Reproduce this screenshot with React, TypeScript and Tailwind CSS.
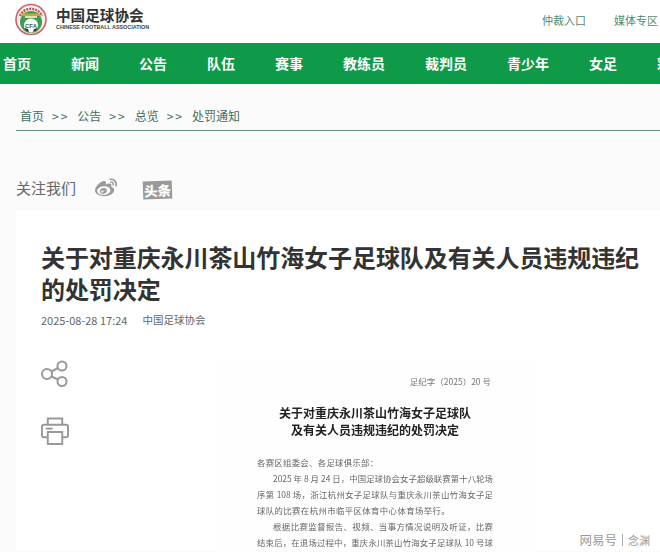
import { FaWeibo } from "react-icons/fa";

const cjk = { fontFamily: '"Noto Sans CJK SC", "Liberation Sans", sans-serif' };

const navItems = ["首页", "新闻", "公告", "队伍", "赛事", "教练员", "裁判员", "青少年", "女足", "彩票"];
const crumbs = ["首页", "公告", "总览", "处罚通知"];

function Logo() {
  return (
    <svg width="34" height="36" viewBox="0 0 34 36" className="shrink-0">
      <circle cx="16" cy="18.5" r="15" fill="#fbeee6" stroke="#c9646c" strokeWidth="1.6" />
      <path d="M5 15 A12 12 0 0 1 27 15" fill="none" stroke="#c0505a" strokeWidth="2.4" strokeDasharray="2 1" />
      <circle cx="16" cy="21" r="11" fill="#3f9c55" />
      <path d="M8 12.5 H24 L25.5 15 H6.5 Z" fill="#c2a93a" />
      <path d="M10 15 H22 V17 H10 Z" fill="#e8e2a0" />
      <circle cx="16" cy="24.5" r="7" fill="#fff" />
      <path d="M9.5 27 L13 28 L14 31 Q10.5 30.5 9.5 27 Z M22.5 27 L19 28 L18 31 Q21.5 30.5 22.5 27 Z" fill="#333" />
      <text
        x="16"
        y="26.5"
        textAnchor="middle"
        fontSize="6"
        fontWeight="700"
        fill="#2f5f48"
        fontFamily="Liberation Sans, sans-serif"
      >
        CFA
      </text>
    </svg>
  );
}

function ShareIcon() {
  return (
    <svg width="28" height="28" viewBox="0 0 28 28" fill="none" stroke="#999" strokeWidth="2">
      <circle cx="6" cy="14" r="5" />
      <circle cx="21" cy="6" r="4.5" />
      <circle cx="21" cy="21.5" r="4.5" />
      <path d="M10.5 11.5 L17 8 M10.5 16.5 L17 19.5" />
    </svg>
  );
}

function PrinterIcon() {
  return (
    <svg width="28" height="28" viewBox="0 0 29 29" fill="none" stroke="#999" strokeWidth="2">
      <path d="M7 8 V1.5 H22 V8" />
      <path d="M7 21 H3 Q1 21 1 19 V10 Q1 8 3 8 H26 Q28 8 28 10 V19 Q28 21 26 21 H22" />
      <path d="M7 15.5 H22 V28 H7 Z" />
      <path d="M5 12 H12" />
    </svg>
  );
}

function DocLine({ text, indent }: { text: string; indent?: boolean }) {
  return (
    <p className={`h-4 leading-4 [text-align:justify] [text-align-last:justify] ${indent ? "pl-4" : ""}`}>{text}</p>
  );
}

export default function App() {
  return (
    <div className="relative h-[552px] w-[660px] overflow-hidden bg-[#fbfbfb]" style={cjk}>
      <header className="flex h-[43px] items-center justify-between bg-white pl-[15px] pr-[2px]">
        <div className="flex items-center gap-[7px] pb-[5px]">
          <Logo />
          <div className="flex w-[90px] flex-col">
            <span className="whitespace-nowrap text-[14.6px] font-bold leading-[16px] text-[#333]">中国足球协会</span>
            <span
              className="whitespace-nowrap text-[5.4px] font-bold leading-[8px] text-[#444]"
              style={{ fontFamily: '"Liberation Sans", sans-serif' }}
            >
              CHINESE FOOTBALL ASSOCIATION
            </span>
          </div>
        </div>
        <div className="flex gap-[28px] pb-[3px] text-[11px] leading-4 text-[#4f8a6e]">
          <span>仲裁入口</span>
          <span>媒体专区</span>
        </div>
      </header>

      <nav className="flex h-[41px] items-center gap-[40px] overflow-hidden whitespace-nowrap bg-[#0e9a48] pb-[1px] pl-[3px] text-[14px] font-bold text-white">
        {navItems.map((item) => (
          <span key={item} className="shrink-0">
            {item}
          </span>
        ))}
      </nav>

      <main className="pl-[16px]">
        <div className="flex h-[47px] items-end gap-[8px] border-b border-[#5f9080] pb-[5px] pl-[4px] text-[12px] leading-[18px] text-[#3f6f60]">
          {crumbs.map((c, i) => (
            <span key={c} className="flex gap-[8px]">
              <span>{c}</span>
              {i < crumbs.length - 1 && <span className="tracking-[2px]">{">>"}</span>}
            </span>
          ))}
        </div>

        <div className="flex h-[80px] items-end pb-[12px]">
          <span className="w-[60px] whitespace-nowrap text-[15px] leading-[22px] text-[#666]">关注我们</span>
          <FaWeibo className="ml-[19px] text-[#999]" size={22} />
          <span className="ml-[26px] flex h-[18px] w-[29px] -rotate-2 items-center justify-center bg-[#9a9a9a] text-[13.5px] font-black text-white">
            头条
          </span>
        </div>

        <article className="h-[340px] bg-white pl-[25px] pt-[30px]">
          <h1 className="w-[600px] text-[24px] font-bold leading-[32px] tracking-[-0.08px] text-[#333]">
            关于对重庆永川茶山竹海女子足球队及有关人员违规违纪的处罚决定
          </h1>
          <div className="mt-[5px] flex h-[20px] items-center gap-[15px] text-[#666]">
            <span className="text-[11px]">2025-08-28 17:24</span>
            <span className="text-[10.5px]">中国足球协会</span>
          </div>
          <div className="mt-[30px] flex">
            <div className="flex w-[174px] flex-col gap-[29px]">
              <ShareIcon />
              <PrinterIcon />
            </div>
            <div className="w-[320px] bg-[#fefefe] px-[42px] pt-[13px] blur-[0.35px]">
              <p className="pr-[2px] text-right text-[8.5px] leading-4 text-[#777]">足纪字（2025）20 号</p>
              <h2 className="mt-[15px] text-center text-[12px] font-bold leading-[17px] text-[#222]">
                关于对重庆永川茶山竹海女子足球队
                <br />
                及有关人员违规违纪的处罚决定
              </h2>
              <div className="mt-[16px] text-[8.4px] text-[#666]">
                <p className="h-4 leading-4 tracking-[0.3px]">各赛区组委会、各足球俱乐部：</p>
                <DocLine indent text="2025 年 8 月 24 日，中国足球协会女子超级联赛第十八轮场" />
                <DocLine text="序第 108 场，浙江杭州女子足球队与重庆永川茶山竹海女子足" />
                <p className="h-4 leading-4 tracking-[0.4px]">球队的比赛在杭州市临平区体育中心体育场举行。</p>
                <DocLine indent text="根据比赛监督报告、视频、当事方情况说明及听证，比赛" />
                <DocLine text="结束后，在退场过程中，重庆永川茶山竹海女子足球队 10 号球" />
              </div>
            </div>
          </div>
        </article>
      </main>

      <div className="absolute bottom-[4px] right-[10px] flex items-center gap-[5px] text-[#999]">
        <span className="text-[12.5px] leading-4">网易号</span>
        <span className="h-[12px] w-px bg-[#aaa]" />
        <span className="text-[11px] leading-4">念渊</span>
      </div>
    </div>
  );
}
